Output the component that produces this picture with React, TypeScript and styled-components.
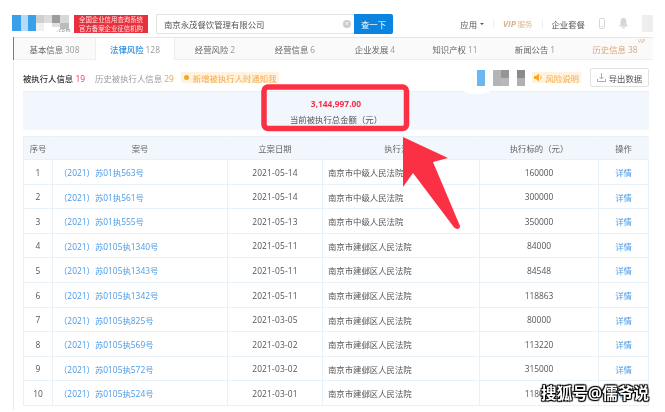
import styled, { createGlobalStyle } from 'styled-components'

const GlobalStyle = createGlobalStyle`
	html, body {
		margin: 0;
		padding: 0;
		background: #ffffff;
	}
	* {
		box-sizing: border-box;
	}
`

const FONT = `"Open Sans", "Noto Sans CJK SC", sans-serif`

const tabs = [
	{ name: '基本信息', count: '308' },
	{ name: '法律风险', count: '128', active: true },
	{ name: '经营风险', count: '2' },
	{ name: '经营信息', count: '6' },
	{ name: '企业发展', count: '4' },
	{ name: '知识产权', count: '11' },
	{ name: '新闻公告', count: '1' },
	{ name: '历史信息', count: '38', vip: true }
]

const ZHONG = '南京市中级人民法院'
const JIANYE = '南京市建邺区人民法院'

const rows = [
	{ no: 1, code: '（2021）苏01执563号', date: '2021-05-14', court: ZHONG, amount: '160000' },
	{ no: 2, code: '（2021）苏01执561号', date: '2021-05-14', court: ZHONG, amount: '300000' },
	{ no: 3, code: '（2021）苏01执555号', date: '2021-05-13', court: ZHONG, amount: '350000' },
	{ no: 4, code: '（2021）苏0105执1340号', date: '2021-05-11', court: JIANYE, amount: '84000' },
	{ no: 5, code: '（2021）苏0105执1343号', date: '2021-05-11', court: JIANYE, amount: '84548' },
	{ no: 6, code: '（2021）苏0105执1342号', date: '2021-05-11', court: JIANYE, amount: '118863' },
	{ no: 7, code: '（2021）苏0105执825号', date: '2021-03-05', court: JIANYE, amount: '80000' },
	{ no: 8, code: '（2021）苏0105执569号', date: '2021-03-02', court: JIANYE, amount: '113220' },
	{ no: 9, code: '（2021）苏0105执572号', date: '2021-03-02', court: JIANYE, amount: '315000' },
	{ no: 10, code: '（2021）苏0105执524号', date: '2021-03-01', court: JIANYE, amount: '118000' }
]

const App = () => {
	return (
		<Page>
			<GlobalStyle />
			<Header>
				<Logo>
					<svg width="58" height="17" viewBox="0 0 58 17">
						<rect x="0" y="0" width="9" height="16" fill="#3aa0ea" />
						<rect x="9" y="0" width="7" height="16" fill="#b5dcf6" />
						<rect x="16" y="0" width="8" height="16" fill="#3aa0ea" />
						<rect x="24" y="0" width="8" height="8" fill="#cfcfcf" />
						<rect x="24" y="8" width="8" height="8" fill="#f0f0f0" />
						<rect x="32" y="0" width="8" height="8" fill="#dcdcdc" />
						<rect x="40" y="0" width="8" height="8" fill="#9c9c9c" />
						<rect x="40" y="8" width="8" height="4" fill="#e0e0e0" />
						<rect x="48" y="0" width="9" height="8" fill="#d8d8d8" />
						<rect x="48" y="8" width="9" height="6" fill="#bcbcbc" />
					</svg>
					<LogoSuffix>.com</LogoSuffix>
				</Logo>
				<Badge>
					<span>全国企业信用查询系统</span>
					<span>官方备案企业征信机构</span>
				</Badge>
				<Search>
					<SearchInput>
						<span>南京永茂餐饮管理有限公司</span>
						<ClearDot>×</ClearDot>
					</SearchInput>
					<SearchButton>查一下</SearchButton>
				</Search>
				<Nav>
					<NavItem>
						应用 <Caret />
					</NavItem>
					<NavDivider />
					<VipLink>
						<b>VIP</b> 服务
					</VipLink>
					<NavDivider />
					<NavItem>企业套餐</NavItem>
					<NavIcons>
						<svg width="6" height="11" viewBox="0 0 6 11">
							<rect x="0.5" y="0.5" width="5" height="10" rx="1" fill="none" stroke="#d6d6d6" />
							<rect x="2" y="8" width="2" height="1" fill="#d6d6d6" />
						</svg>
						<svg width="9" height="11" viewBox="0 0 9 11">
							<path d="M4.500 0c2 0 2.900 1.600 2.900 3.500v2.700L9 8.500H0l1.600-2.300V3.500C1.600 1.600 2.500 0 4.500 0z" fill="#d6d6d6" />
							<rect x="3.300" y="9" width="2.400" height="1.500" fill="#d6d6d6" />
						</svg>
						<Avatar />
					</NavIcons>
				</Nav>
			</Header>
			<Main>
				<TabBar>
					{tabs.map((tab) => (
						<Tab key={tab.name} $active={tab.active} $vip={tab.vip}>
							<b>{tab.name}</b> <i>{tab.count}</i>
							{tab.vip && <VipMark>VIP</VipMark>}
						</Tab>
					))}
				</TabBar>
				<FilterRow>
					<FilterGroup>
						<FilterActive>
							被执行人信息 <em>19</em>
						</FilterActive>
						<FilterLink>
							历史被执行人信息 <em>29</em>
						</FilterLink>
						<NoticeChip>
							<NoticeDot />
							新增被执行人时通知我
						</NoticeChip>
					</FilterGroup>
					<FilterGroup>
						<svg width="48" height="16" viewBox="0 0 48 16">
							<rect x="0" y="0" width="8" height="16" fill="#6cb7ef" />
							<rect x="16" y="0" width="8" height="16" fill="#b4b4b4" />
							<rect x="24" y="0" width="8" height="8" fill="#959595" />
							<rect x="24" y="8" width="8" height="8" fill="#b8b8b8" />
							<rect x="40" y="0" width="8" height="8" fill="#8b8b8b" />
							<rect x="40" y="8" width="8" height="8" fill="#b0b0b0" />
						</svg>
						<RiskChip>
							<svg width="10" height="9" viewBox="0 0 10 9">
								<path d="M0 3h2l3-2.500v8L2 6H0z" fill="#f5a623" />
								<path d="M6.300 2.500c1 1.200 1 2.800 0 4" fill="none" stroke="#f5a623" />
							</svg>
							风险说明
						</RiskChip>
						<ExportButton>
							<svg width="9" height="9" viewBox="0 0 9 9">
								<path d="M4.500 0v6M2.500 4l2 2 2-2M.5 6v2.500h8V6" fill="none" stroke="#aaaaaa" />
							</svg>
							导出数据
						</ExportButton>
					</FilterGroup>
				</FilterRow>
				<Content>
					<Summary>
						<SummaryAmount>3,144,997.00</SummaryAmount>
						<SummaryLabel>当前被执行总金额（元）</SummaryLabel>
					</Summary>
					<Table>
						<colgroup>
							<col style={{ width: 29 }} />
							<col style={{ width: 175 }} />
							<col style={{ width: 95 }} />
							<col style={{ width: 157 }} />
							<col style={{ width: 119 }} />
							<col style={{ width: 50 }} />
						</colgroup>
						<thead>
							<tr>
								<HeadCell>序号</HeadCell>
								<HeadCell>案号</HeadCell>
								<HeadCell>立案日期</HeadCell>
								<HeadCell>执行法院</HeadCell>
								<HeadCell>执行标的（元）</HeadCell>
								<HeadCell>操作</HeadCell>
							</tr>
						</thead>
						<tbody>
							{rows.map((row) => (
								<BodyRow key={row.no}>
									<Cell $center>{row.no}</Cell>
									<LinkCell>{row.code}</LinkCell>
									<DateCell $center>{row.date}</DateCell>
									<Cell>{row.court}</Cell>
									<Cell $center>{row.amount}</Cell>
									<LinkCell $center>详情</LinkCell>
								</BodyRow>
							))}
						</tbody>
					</Table>
				</Content>
			</Main>
			<Callout>
				<svg width="665" height="412" viewBox="0 0 665 412">
					<ellipse cx="477" cy="90" rx="14" ry="4" fill="#ffffff" />
					<rect x="264" y="87" width="142.500" height="41.500" rx="4" fill="none" stroke="#fc3044" strokeWidth="5.500" />
					<path
						d="M403 137L448 158L433 162L460 226Q460 229 457 229Q455 229 453 226L413 173L403 187Z"
						fill="#fc3044"
					/>
				</svg>
			</Callout>
			<Watermark>搜狐号@儒爷说</Watermark>
		</Page>
	)
}

const Page = styled.div`
	position: relative;
	width: 665px;
	height: 412px;
	overflow: hidden;
	background: #ffffff;
	font-family: ${FONT};
	font-size: 8.4px;
	color: #555555;
	filter: blur(0.3px);
`

const Header = styled.header`
	display: flex;
	align-items: center;
	height: 37px;
	padding: 13px 12px 3px 12px;
`

const Logo = styled.div`
	position: relative;
	width: 58px;
	height: 17px;
	margin-right: 4px;
`

const LogoSuffix = styled.span`
	position: absolute;
	right: -1px;
	bottom: -2px;
	font-size: 5.500px;
	line-height: 7px;
	color: #777777;
	letter-spacing: 0.5px;
`

const Badge = styled.div`
	display: flex;
	flex-direction: column;
	justify-content: center;
	align-items: center;
	width: 74px;
	height: 18px;
	background: #e8303c;
	color: #ffdfe0;
	font-size: 6.400px;
	line-height: 9px;
`

const Search = styled.div`
	display: flex;
	margin-left: 8px;
	height: 20px;
`

const SearchInput = styled.div`
	display: flex;
	align-items: center;
	justify-content: space-between;
	width: 198px;
	padding: 0 3px 0 7px;
	border: 1px solid #e2e2e2;
	border-right: none;
	border-radius: 2px 0 0 2px;
	font-size: 8.4px;
	color: #555555;
`

const ClearDot = styled.span`
	display: flex;
	align-items: center;
	justify-content: center;
	width: 8px;
	height: 8px;
	border-radius: 50%;
	background: #cccccc;
	color: #ffffff;
	font-size: 7px;
	line-height: 1;
`

const SearchButton = styled.div`
	display: flex;
	align-items: center;
	justify-content: center;
	width: 39px;
	background: #0a84e0;
	border-radius: 0 2px 2px 0;
	color: #ffffff;
	font-size: 8.4px;
`

const Nav = styled.nav`
	display: flex;
	align-items: center;
	gap: 9px;
	margin-left: auto;
`

const NavItem = styled.span`
	display: flex;
	align-items: center;
	gap: 3px;
	color: #555555;
`

const NavIcons = styled.div`
	display: flex;
	align-items: center;
	gap: 14px;
	margin-left: 5px;
`

const Caret = styled.i`
	width: 0;
	height: 0;
	border-left: 2px solid transparent;
	border-right: 2px solid transparent;
	border-top: 2.500px solid #555555;
`

const NavDivider = styled.i`
	width: 1px;
	height: 9px;
	background: #eeeeee;
`

const VipLink = styled.span`
	color: #d9b48c;
	font-size: 7.4px;

	b {
		font-size: 8.4px;
		font-style: italic;
	}
`

const Avatar = styled.i`
	width: 11px;
	height: 17px;
	background: #eeeeee;
`

const Main = styled.main`
	margin-left: 13px;
	width: 640px;
	height: 373px;
	border-left: 1px solid #f0ebe2;
`

const TabBar = styled.div`
	display: grid;
	grid-template-columns: 81px repeat(7, 80px);
	height: 23px;
	background: #fafafa;
	border-top: 1px solid #e6e6e6;
	border-bottom: 1px solid #eeeeee;
	box-shadow: -1px 0 0 #2b90e3;
`

const Tab = styled.div<{ $active?: boolean; $vip?: boolean }>`
	position: relative;
	display: flex;
	align-items: center;
	justify-content: center;
	gap: 2px;
	height: 22px;
	background: ${({ $active }) => ($active ? '#ffffff' : 'transparent')};
	border-left: ${({ $active }) => ($active ? '1px solid #eeeeee' : 'none')};
	border-right: ${({ $active }) => ($active ? '1px solid #eeeeee' : 'none')};
	color: ${({ $active, $vip }) => ($active ? '#2b90e3' : $vip ? '#d9a77a' : '#666666')};

	b {
		font-weight: ${({ $active }) => ($active ? 500 : 400)};
	}

	i {
		font-style: normal;
		color: ${({ $vip }) => ($vip ? '#c9a888' : '#999999')};
	}
`

const VipMark = styled.span`
	position: absolute;
	right: 10px;
	top: 0;
	font-size: 5px;
	color: #e0a878;
	font-style: italic;
`

const FilterRow = styled.div`
	display: flex;
	align-items: center;
	justify-content: space-between;
	height: 31px;
	padding: 4px 4px 0 9px;
`

const FilterGroup = styled.div`
	display: flex;
	align-items: center;
	gap: 7px;
`

const FilterActive = styled.span`
	font-weight: 500;
	color: #333333;

	em {
		font-style: normal;
		color: #f5304a;
	}
`

const FilterLink = styled.span`
	color: #999999;
	margin-left: 3px;

	em {
		font-style: normal;
		color: #f0a050;
	}
`

const NoticeChip = styled.span`
	display: flex;
	align-items: center;
	gap: 4px;
	height: 11px;
	padding: 0 2px 0 3px;
	background: #fff3e0;
	color: #f5ab4e;
`

const NoticeDot = styled.i`
	width: 5px;
	height: 5px;
	border-radius: 50%;
	background: #f5a623;
`

const RiskChip = styled.span`
	display: flex;
	align-items: center;
	gap: 2px;
	height: 11px;
	padding: 0 2px;
	background: #fff3e0;
	color: #f5ab4e;
	white-space: nowrap;
`

const ExportButton = styled.span`
	display: flex;
	align-items: center;
	justify-content: center;
	gap: 3px;
	width: 59px;
	height: 19px;
	margin-left: 2px;
	border: 1px solid #e2e2e2;
	border-radius: 2px;
	color: #555555;
`

const Content = styled.div`
	padding: 0 4px 0 9px;
`

const Summary = styled.div`
	display: flex;
	flex-direction: column;
	align-items: center;
	justify-content: center;
	gap: 5px;
	height: 39px;
	margin-bottom: 6px;
	background: #f1f7fc;
	border-top: 1px solid #e8f0f8;
`

const SummaryAmount = styled.span`
	font-weight: 700;
	color: #f5304a;
	line-height: 11px;
`

const SummaryLabel = styled.span`
	color: #555555;
	line-height: 11px;
`

const Table = styled.table`
	width: 625px;
	table-layout: fixed;
	border-collapse: collapse;
`

const HeadCell = styled.th`
	height: 23px;
	padding: 0;
	background: #f1f7fc;
	border: 1px solid #e8f0f8;
	border-right-color: #f1f7fc;
	font-weight: 400;
	color: #666666;
	text-align: center;
`

const Cell = styled.td<{ $center?: boolean }>`
	height: 25px;
	padding: ${({ $center }) => ($center ? '0' : '0 0 0 5px')};
	border: 1px solid #e8f0f8;
	text-align: ${({ $center }) => ($center ? 'center' : 'left')};
	color: #555555;
	white-space: nowrap;
`

const DateCell = styled(Cell)`
	letter-spacing: 0.2px;
`

// rows alternate 25 and 24 so the pitch stays near the reference's 24.6px
const BodyRow = styled.tr`
	&:nth-child(5n + 2) td,
	&:nth-child(5n + 4) td {
		height: 24px;
	}
`

const LinkCell = styled(Cell)`
	padding: ${({ $center }) => ($center ? '0' : '0 0 0 6px')};
	color: #4a9ae8;
`

const Callout = styled.div`
	position: absolute;
	inset: 0;
	pointer-events: none;
`

const Watermark = styled.div`
	position: absolute;
	left: 541px;
	top: 383px;
	font-size: 15.500px;
	font-weight: 700;
	line-height: 20px;
	color: #ffffff;
	letter-spacing: 0.2px;
	text-shadow: 0 0 1px #000000, 1px 1px 1px #000000, -1px -1px 1px #000000, 1px -1px 1px #000000, -1px 1px 1px #000000;
`

export default App
